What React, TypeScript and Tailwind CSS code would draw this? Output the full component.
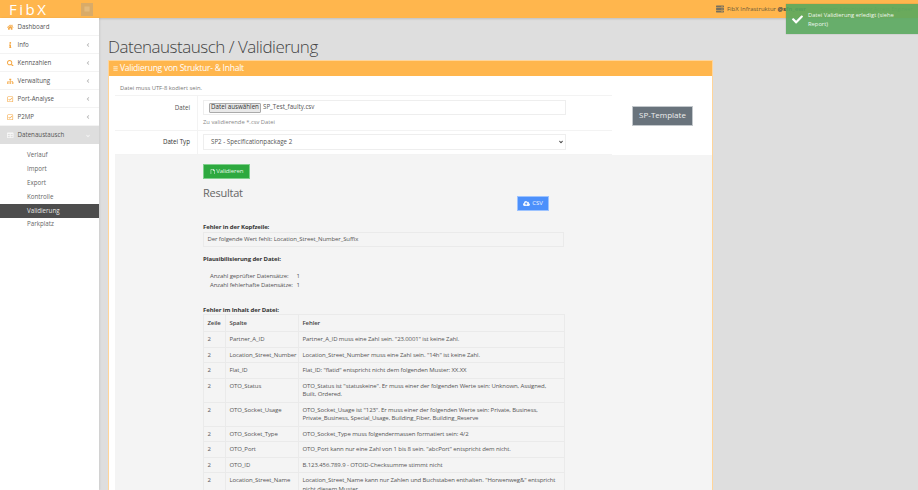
import { FaHome, FaInfo, FaSearch, FaSitemap, FaRegCheckSquare, FaTable, FaAngleLeft, FaAngleDown, FaBars, FaCheck, FaCloudUploadAlt, FaRegFile, FaServer } from "react-icons/fa";

const menu = [
  { label: "Dashboard", icon: <FaHome />, arrow: false },
  { label: "Info", icon: <FaInfo />, arrow: true },
  { label: "Kennzahlen", icon: <FaSearch />, arrow: true },
  { label: "Verwaltung", icon: <FaSitemap />, arrow: true },
  { label: "Port-Analyse", icon: <FaRegCheckSquare />, arrow: true },
  { label: "P2MP", icon: <FaRegCheckSquare />, arrow: true },
];

const subs = ["Verlauf", "Import", "Export", "Kontrolle", "Validierung", "Parkplatz"];

const rows = [
  ["Partner_A_ID", 'Partner_A_ID muss eine Zahl sein. "23.0001" ist keine Zahl.'],
  ["Location_Street_Number", 'Location_Street_Number muss eine Zahl sein. "14h" ist keine Zahl.'],
  ["Flat_ID", 'Flat_ID: "flatid" entspricht nicht dem folgenden Muster: XX.XX'],
  ["OTO_Status", 'OTO_Status ist "statuskeine". Er muss einer der folgenden Werte sein: Unknown, Assigned, Built, Ordered.'],
  ["OTO_Socket_Usage", 'OTO_Socket_Usage ist "123". Er muss einer der folgenden Werte sein: Private, Business, Private_Business, Special_Usage, Building_Fiber, Building_Reserve'],
  ["OTO_Socket_Type", "OTO_Socket_Type muss folgendermassen formatiert sein: 4/2"],
  ["OTO_Port", 'OTO_Port kann nur eine Zahl von 1 bis 8 sein. "abcPort" entspricht dem nicht.'],
  ["OTO_ID", "B.123.456.789.9 - OTOID-Checksumme stimmt nicht"],
  ["Location_Street_Name", 'Location_Street_Name kann nur Zahlen und Buchstaben enthalten. "Horwenweg&" entspricht nicht diesem Muster.'],
];

export default function App() {
  return (
    <div className="relative flex h-[490px] w-[918px] flex-col overflow-hidden bg-[#dedede] font-['Open_Sans',sans-serif] text-[6.2px] leading-[8.5px] text-[#555]">
      <header className="flex h-[18px] shrink-0 items-center bg-[#ffb64d] shadow-[0_1px_2px_rgba(0,0,0,0.15)]">
        <div className="w-[81px] pl-[9px] text-[15px] font-medium leading-none tracking-[2.5px] text-white">FibX</div>
        <div className="flex h-[13px] w-[12px] items-center justify-center bg-[#d9ab68] text-[6px] text-[#efc98f]"><FaBars /></div>
        <div className="ml-auto flex w-[202px] items-center gap-[3px] text-[6px] text-[#6b5a3a]">
          <FaServer className="shrink-0 text-[8px] text-[#77705f]" />
          <span className="whitespace-nowrap">FibX Infrastruktur <b className="text-[#444]">@sfn_ewr</b></span>
          <span className="ml-[11px] whitespace-nowrap text-[5.2px] text-[#8a8a4a]">System Administrator Access Engineer</span>
        </div>
      </header>

      <div className="flex min-h-0 flex-1">
        <aside className="w-[99px] shrink-0 bg-white text-[#555] shadow-[1px_0_2px_rgba(0,0,0,0.08)]">
          {menu.map((m) => (
            <div key={m.label} className="flex h-[18px] items-center border-b border-[#f3f3f3] pl-[7px] pr-[8px] pt-[1px]">
              <span className="flex w-[10px] text-[6.5px] text-[#f5a742]">{m.icon}</span>
              <span className="ml-[0.5px]">{m.label}</span>
              {m.arrow && <FaAngleLeft className="ml-auto text-[6px] text-[#bbb]" />}
            </div>
          ))}
          <div className="flex h-[18px] items-center bg-[#dedede] pl-[7px] pr-[8px] pt-[1px]">
            <span className="flex w-[10px] text-[6.5px] text-[#f7f7f7]"><FaTable /></span>
            <span className="ml-[0.5px]">Datenaustausch</span>
            <FaAngleDown className="ml-auto text-[6px] text-[#f2f2f2]" />
          </div>
          <div className="pt-[4.5px]">
            {subs.map((s) => (
              <div key={s} className={`flex h-[13.85px] items-center pl-[27px] ${s === "Validierung" ? "bg-[#4d4d4d] text-[#e8e8e8]" : "text-[#666]"}`}>{s}</div>
            ))}
          </div>
        </aside>

        <main className="min-w-0 flex-1 pl-[9px]">
          <h1 className="mt-[18px] h-[24px] text-[17px] font-light leading-[21px] tracking-[-0.5px] text-[#444]">Datenaustausch / Validierung</h1>

          <section className="w-[605px] border border-[#ffd59a] bg-white">
            <div className="flex h-[15px] items-center gap-[2px] bg-[#ffb64d] pl-[4px] text-[8.5px] tracking-[-0.25px] text-white">
              <FaBars className="text-[5px]" />
              <span>Validierung von Struktur- &amp; Inhalt</span>
            </div>
            <div className="pl-[6px]">
              <div className="flex h-[79px]">
                <div className="w-[497px] shrink-0">
                  <div className="flex h-[20px] items-center border-b border-[#f3f3f3] pl-[5px] pt-[6px] text-[5.8px] text-[#777]">Datei muss UTF-8 kodiert sein.</div>
                  <div className="flex h-[35px] border-b border-[#f3f3f3]">
                    <div className="w-[83px] shrink-0 border-r border-[#f3f3f3] pr-[7px] pt-[8px] text-right text-[#555]">Datei</div>
                    <div className="pl-[5px] pt-[4px]">
                      <div className="flex h-[15px] w-[363px] items-center border border-[#eee] pl-[5px]">
                        <span className="flex h-[10px] w-[52px] items-center justify-center whitespace-nowrap rounded-[1px] border border-[#aaa] bg-[#e9e9e9] text-[#333]">Datei auswählen</span>
                        <span className="ml-[2px] text-[#555]">SP_Test_faulty.csv</span>
                      </div>
                      <div className="mt-[3px] text-[5.8px] text-[#888]">Zu validierende *.csv Datei</div>
                    </div>
                  </div>
                  <div className="flex h-[24px] border-b border-[#f3f3f3]">
                    <div className="w-[83px] shrink-0 border-r border-[#f3f3f3] pr-[7px] pt-[7px] text-right text-[#333]">Datei Typ</div>
                    <div className="pl-[5px] pt-[3px]">
                      <div className="flex h-[16px] w-[363px] items-center justify-between border border-[#eee] pl-[7px] pr-[1px] text-[#555]">
                        <span>SP2 - Specificationpackage 2</span>
                        <FaAngleDown className="text-[6px] text-[#444]" />
                      </div>
                    </div>
                  </div>
                </div>
                <div className="ml-[20px] mt-[29.5px] flex h-[20px] w-[61px] items-center justify-center border border-[#c3c8cc] bg-[#69737c] text-[8px] text-[#eee]">SP-Template</div>
              </div>

              <div className="h-[400px] bg-[#f4f4f4] pl-[88px] pt-[9px] text-[6px] tracking-[-0.1px]">
                <div className="w-[361px]">
                  <div className="flex h-[15px] w-[47px] items-center justify-center gap-[1px] border border-[#7fd08c] bg-[#2da93f] text-[#e5f6e7]">
                    <FaRegFile className="text-[5.5px]" />
                    <span>Validieren</span>
                  </div>
                  <div className="flex h-[37px] items-start justify-between pr-[15px]">
                    <div className="pt-[6px] text-[11px] leading-[16px] tracking-[-0.25px] text-[#666]">Resultat</div>
                    <div className="mt-[17px] flex h-[15px] w-[32px] items-center justify-center gap-[2px] border border-[#9dc3ff] bg-[#4c90fb] text-[#f1f6ff]">
                      <FaCloudUploadAlt className="text-[7px]" />
                      <span>CSV</span>
                    </div>
                  </div>
                  <div className="mt-[7px] font-bold text-[#333]">Fehler in der Kopfzeile:</div>
                  <div className="flex h-[15px] items-center border border-[#eaeaea] pl-[3.5px] text-[#555]">Der folgende Wert fehlt: Location_Street_Number_Suffix</div>
                  <div className="mt-[8.5px] font-bold text-[#333]">Plausibilisierung der Datei:</div>
                  <div className="mt-[8.5px] flex pl-[7px] text-[#555]">
                    <div className="w-[86.5px]">
                      <div className="h-[9px] whitespace-nowrap">Anzahl geprüfter Datensätze:</div>
                      <div className="h-[9px] whitespace-nowrap">Anzahl fehlerhafte Datensätze:</div>
                    </div>
                    <div>
                      <div className="h-[9px]">1</div>
                      <div className="h-[9px]">1</div>
                    </div>
                  </div>
                  <div className="mt-[15.5px] font-bold text-[#333]">Fehler im Inhalt der Datei:</div>
                  <table className="w-[361px] table-fixed border-collapse">
                    <colgroup>
                      <col className="w-[22px]" />
                      <col className="w-[73px]" />
                      <col className="w-[266px]" />
                    </colgroup>
                    <thead>
                      <tr className="h-[17px] text-left">
                        <th className="border border-[#eaeaea] pl-[3.5px] font-semibold text-[#444]">Zeile</th>
                        <th className="border border-[#eaeaea] pl-[3.5px] font-semibold text-[#444]">Spalte</th>
                        <th className="border border-[#eaeaea] pl-[3.5px] font-semibold text-[#444]">Fehler</th>
                      </tr>
                    </thead>
                    <tbody>
                      {rows.map(([col, err]) => (
                        <tr key={col}>
                          <td className="border border-[#eaeaea] px-[3.5px] py-[3px] align-top">2</td>
                          <td className="whitespace-nowrap border border-[#eaeaea] px-[3.5px] py-[3px] align-top">{col}</td>
                          <td className="border border-[#eaeaea] px-[3.5px] py-[3px] align-top">{err}</td>
                        </tr>
                      ))}
                    </tbody>
                  </table>
                </div>
              </div>
            </div>
          </section>
        </main>
      </div>

      <div className="absolute right-0 top-[4px] flex h-[30px] w-[132px] bg-[#5aa85e]/90 pl-[6px] pt-[7px] text-[5.8px] leading-[8.5px] text-[#eef7ee] shadow-[0_0_1px_rgba(0,0,0,0.3)]">
        <FaCheck className="mt-[3px] shrink-0 text-[11px] text-white" />
        <span className="ml-[5px] w-[95px]">Datei Validierung erledigt (siehe Report)</span>
      </div>
    </div>
  );
}
